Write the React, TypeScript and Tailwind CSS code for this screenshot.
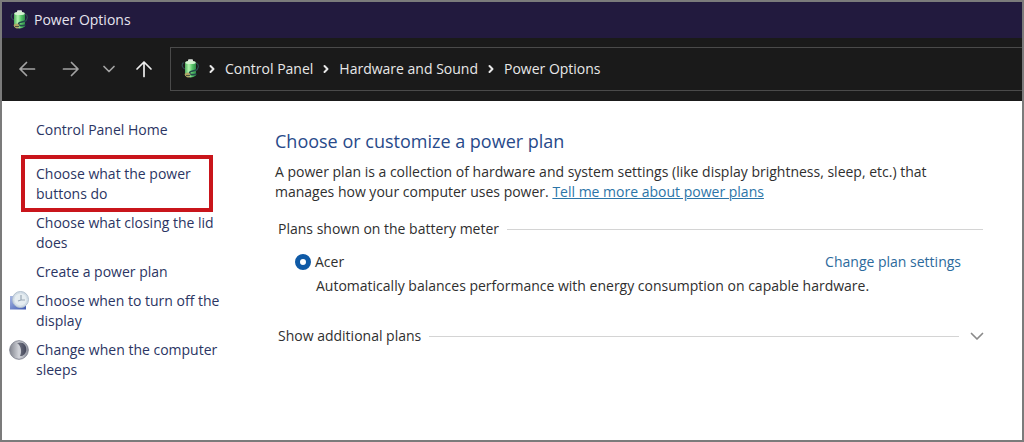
import React, { useState } from 'react';

const sidebarLinks = [
  { label: 'Choose what the power buttons do', highlighted: true },
  { label: 'Choose what closing the lid does' },
  { label: 'Create a power plan' },
  { label: 'Choose when to turn off the display', icon: <DisplayClockIcon /> },
  { label: 'Change when the computer sleeps', icon: <MoonIcon /> },
];

const breadcrumbs = ['Control Panel', 'Hardware and Sound', 'Power Options'];

function BatteryIcon() {
  return (
    <svg viewBox="0 0 18 20" className="h-5 w-[18px] shrink-0" aria-hidden="true">
      <defs>
        <linearGradient id="battery-body" x1="0" x2="1">
          <stop offset="0" stopColor="#4fae5c" />
          <stop offset="0.35" stopColor="#b4f5b0" />
          <stop offset="0.65" stopColor="#56c768" />
          <stop offset="1" stopColor="#2f8a4a" />
        </linearGradient>
      </defs>
      <path d="M2.500 3.500C0 6 1.500 9 4 10M15 4c3.500 1.500 3 6-1 8" fill="none" stroke="#2f4a50" strokeWidth="1.200" />
      <rect x="7" y="0.300" width="5" height="3" rx="1" fill="#dfe6df" />
      <path d="M4 3.500q5.500-3 11 0v13q-5.500 4-11 0z" fill="url(#battery-body)" />
      <ellipse cx="9.500" cy="3.400" rx="5.200" ry="1.600" fill="#d3f2d0" />
      <path d="M15.500 10.500c-2 2-7 1-7 3.500 0 2 4 2 7 1" fill="none" stroke="#24484c" strokeWidth="1.600" />
      <path d="M3.500 15c2-2 4-2 6 0l-1 3c-2 1-4 0-5-3z" fill="#b0a766" />
      <path d="M5 16.500h4" stroke="#4a5540" strokeWidth="1" />
    </svg>
  );
}

function DisplayClockIcon() {
  return (
    <svg viewBox="0 0 20 20" className="h-5 w-5" aria-hidden="true">
      <defs>
        <linearGradient id="display-screen" x1="0" y1="0" x2="1" y2="1">
          <stop offset="0" stopColor="#a9b9e6" />
          <stop offset="1" stopColor="#3f59b0" />
        </linearGradient>
      </defs>
      <path d="M1 5h16v13.500H1z" fill="url(#display-screen)" />
      <circle cx="11.500" cy="8.500" r="8" fill="#d3dee7" stroke="#b3c0ce" />
      <circle cx="11.500" cy="8.500" r="6" fill="#e6edf1" />
      <path d="M12 4v5h4M12 9l-3 1" fill="none" stroke="#9aa8b6" strokeWidth="1.200" />
    </svg>
  );
}

function MoonIcon() {
  return (
    <svg viewBox="0 0 20 20" className="h-5 w-5" aria-hidden="true">
      <defs>
        <linearGradient id="moon-face" x1="0" x2="1">
          <stop offset="0" stopColor="#82858f" />
          <stop offset="0.5" stopColor="#d2d4da" />
          <stop offset="1" stopColor="#8f929d" />
        </linearGradient>
        <linearGradient id="moon-shade" x1="0" x2="1">
          <stop offset="0" stopColor="#777a86" />
          <stop offset="1" stopColor="#43465a" />
        </linearGradient>
      </defs>
      <circle cx="10" cy="10" r="9.300" fill="url(#moon-face)" stroke="#858894" />
      <path d="M8 3c6-2 9.500 2 9.300 7-.3 4-3.800 6.500-6.300 6 2-4 1.500-10-3-13z" fill="url(#moon-shade)" />
    </svg>
  );
}

function ArrowIcon({ d, className }: { d: string; className: string }) {
  return (
    <svg
      viewBox="0 0 18 18"
      className={className}
      fill="none"
      stroke="currentColor"
      strokeLinecap="round"
      strokeLinejoin="round"
      aria-hidden="true"
    >
      <path d={d} />
    </svg>
  );
}

function NavBar() {
  return (
    <nav className="flex items-center bg-[#1a1a1a] pt-[9px] pb-[10px] pl-4 text-[#a3a3a3]">
      <div className="flex w-[152px] shrink-0 items-center">
        <button type="button" aria-label="Back">
          <ArrowIcon d="M16.500 9H2M8.500 2.500L2 9l6.500 6.500" className="h-[18px] w-[18px] stroke-[1.7]" />
        </button>
        <button type="button" aria-label="Forward" className="ml-[26px]">
          <ArrowIcon d="M1.500 9H16M9.500 2.500L16 9l-6.500 6.500" className="h-[18px] w-[18px] stroke-[1.7]" />
        </button>
        <button type="button" aria-label="Recent locations" className="ml-5">
          <ArrowIcon d="M4 6.500L9 11.500l5-5" className="h-[18px] w-[18px] stroke-[1.7]" />
        </button>
        <button type="button" aria-label="Up" className="ml-[17px] text-[#eeeeee]">
          <ArrowIcon d="M9 16.500V2M2 9l7-7 7 7" className="h-[18px] w-[18px] stroke-[1.7]" />
        </button>
      </div>
      <div className="flex h-11 min-w-0 flex-1 items-center border border-r-0 border-[#4a4a4a] pl-[10px] text-[#e8e8e8]">
        <BatteryIcon />
        <ol className="flex items-center">
          {breadcrumbs.map((crumb) => (
            <li key={crumb} className="flex items-center">
              <ArrowIcon d="M7.500 6L10.500 9l-3 3" className="mx-1 h-[18px] w-[18px] stroke-2" />
              <a href="#" className="whitespace-nowrap">{crumb}</a>
            </li>
          ))}
        </ol>
      </div>
    </nav>
  );
}

function Sidebar() {
  return (
    <aside className="w-[273px] shrink-0 pt-[19px] pl-[7px] text-[#2b3563]">
      <a href="#" className="ml-[27px] block">Control Panel Home</a>
      <ul className="mt-6 flex flex-col gap-[9px]">
        {sidebarLinks.map(({ label, icon, highlighted }) => (
          <li key={label} className="flex items-start">
            <span className="w-[27px] shrink-0">{icon}</span>
            <a href="#" className="relative w-[190px]">
              {label}
              {highlighted && (
                <span className="pointer-events-none absolute -top-[9px] right-[13px] -bottom-2 -left-[15px] border-4 border-[#c9151b]" />
              )}
            </a>
          </li>
        ))}
      </ul>
    </aside>
  );
}

export default function App() {
  const [plan, setPlan] = useState('acer');

  return (
    <div className="flex min-h-screen flex-col border-2 border-[#7b7b7b] bg-white font-['Open_Sans','Noto_Sans',sans-serif] text-[14px] leading-5">
      <header className="flex h-9 items-center gap-[6px] bg-[#221a3e] pl-2 text-[#e6e4ee]">
        <BatteryIcon />
        <h1>Power Options</h1>
      </header>
      <NavBar />

      <div className="flex flex-1">
        <Sidebar />
        <main className="min-w-0 flex-1 pt-[26px] pr-[39px] pb-6 text-[#2f2f2f]">
          <h2 className="text-lg leading-7 text-[#284a8a]">Choose or customize a power plan</h2>
          <p className="mt-[7px] max-w-[670px]">
            A power plan is a collection of hardware and system settings (like display brightness, sleep, etc.) that
            manages how your computer uses power.{' '}
            <a href="#" className="text-[#2c75a8] underline">Tell me more about power plans</a>
          </p>

          <section className="mt-[17px] pl-[3px]">
            <div className="flex items-center gap-2">
              <h3>Plans shown on the battery meter</h3>
              <span className="h-px flex-1 bg-[#d4d4d4]" />
            </div>
            <div className="mt-[13px] flex items-center pr-[22px] pl-[17px]">
              <input
                id="plan-acer"
                type="radio"
                name="plan"
                value="acer"
                checked={plan === 'acer'}
                onChange={(e) => setPlan(e.target.value)}
                className="h-4 w-4 appearance-none rounded-full border border-[#0f5aa6] bg-white checked:border-5"
              />
              <label htmlFor="plan-acer" className="ml-1">Acer</label>
              <a href="#" className="ml-auto text-[#2c6a9c]">Change plan settings</a>
            </div>
            <p className="mt-1 pl-[38px]">
              Automatically balances performance with energy consumption on capable hardware.
            </p>
          </section>

          <div className="-mr-[3px] pl-[3px]">
            <button type="button" className="mt-[30px] flex w-full items-center text-left">
              Show additional plans
              <span className="mr-[9px] ml-2 h-px flex-1 bg-[#d4d4d4]" />
              <ArrowIcon d="M3.500 6.500L9 12l5.500-5.500" className="h-[18px] w-[18px] stroke-[1.7] text-[#8a8a8a]" />
            </button>
          </div>
        </main>
      </div>
    </div>
  );
}
